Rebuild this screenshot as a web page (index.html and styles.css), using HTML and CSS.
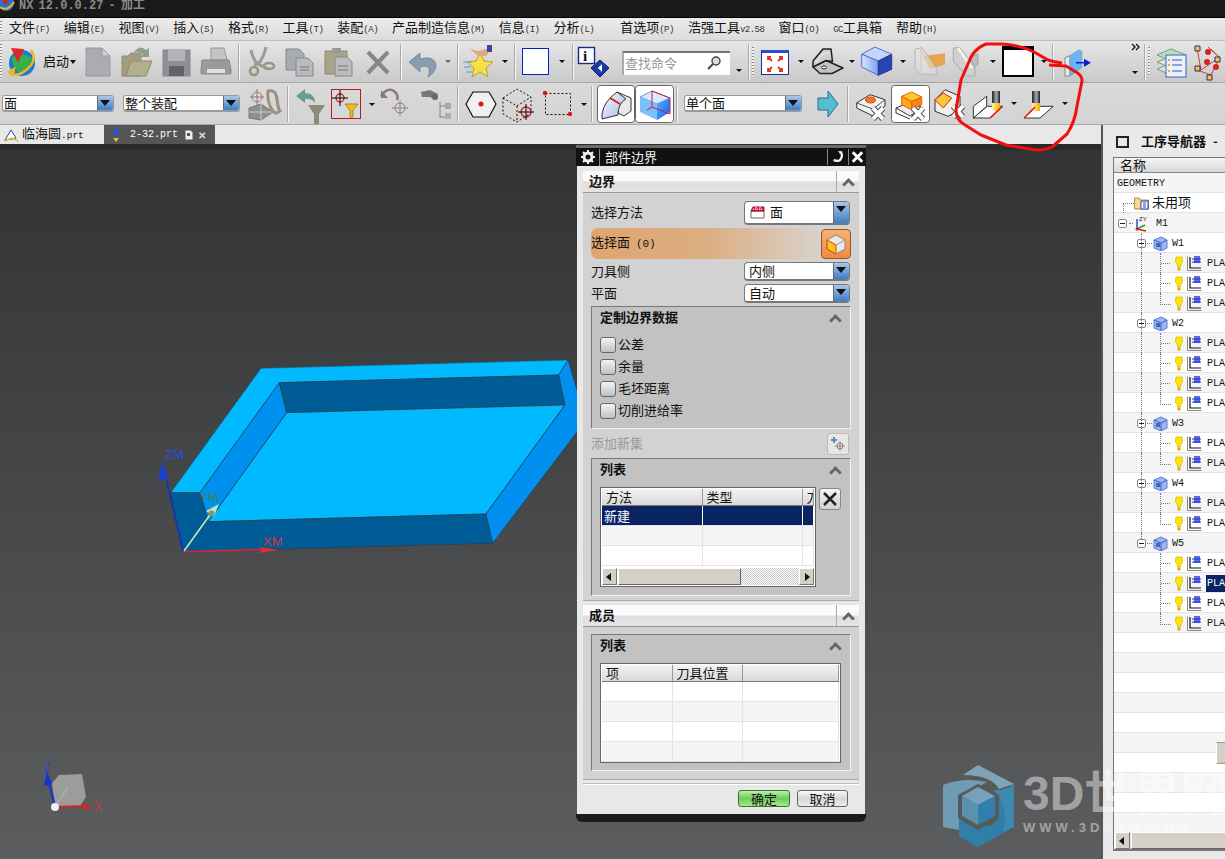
FILE: index.html
```html
<!DOCTYPE html>
<html lang="zh-CN">
<head>
	<meta charset="UTF-8">
	<title>NX 12.0.0.27 - 加工</title>
	<link rel="stylesheet" href="styles.css">
</head>
<body>
<svg class="defs" width="0" height="0">
	<defs>
		<linearGradient id="gTool" x1="0" y1="0" x2="1" y2="0"><stop offset="0" stop-color="#222"/><stop offset=".55" stop-color="#a4aab8"/><stop offset="1" stop-color="#1a1a2a"/></linearGradient>
		<linearGradient id="gTip" x1="0" y1="0" x2="1" y2="0"><stop offset="0" stop-color="#fff0a0"/><stop offset="1" stop-color="#f0b010"/></linearGradient>
		<linearGradient id="gCubeL" x1="0" y1="0" x2="1" y2="0"><stop offset="0" stop-color="#d8e4ff"/><stop offset="1" stop-color="#7fa0f0"/></linearGradient>
		<linearGradient id="gBlueR" x1="0" y1="0" x2="1" y2="1"><stop offset="0" stop-color="#58b0ff"/><stop offset="1" stop-color="#0a60e8"/></linearGradient>
		<linearGradient id="gSheet" x1="0" y1="0" x2="1" y2="1"><stop offset="0" stop-color="#f4f6ff"/><stop offset="1" stop-color="#a8bce4"/></linearGradient>
		<symbol id="minus" viewBox="0 0 9 9"><rect x=".5" y=".5" width="8" height="8" rx="1.5" fill="#fff" stroke="#888"/><path d="M2 4.500h5" stroke="#222"/></symbol>
		<symbol id="part" viewBox="0 0 15 15"><path d="M1 4l7-3 6 3v8l-6 3-7-3z" fill="#9db4f2" stroke="#5f7fd8"/><path d="M1 4l7 3 6-3M8 7v8" fill="none" stroke="#3f5fc0"/><rect x="3" y="7" width="4" height="4" fill="#4a64b8"/></symbol>
		<symbol id="bulb" viewBox="0 0 8 15"><path d="M1 1h6l.6 5-2 3v2H2.500V9L.4 6z" fill="#ffe600" stroke="#c8a800" stroke-width=".6"/><circle cx="4" cy="13" r="1.800" fill="#e2b400"/></symbol>
		<symbol id="oper" viewBox="0 0 15 15"><path d="M.5.500v14h14" fill="none" stroke="#888"/><path d="M3 1v11h11" fill="none" stroke="#111" stroke-width="1.200"/><rect x="7" y="0" width="6" height="7" fill="#5a6ee0"/><path d="M5 3h9M5 6h9" stroke="#1a2fd0"/></symbol>
	</defs>
</svg>

<div class="page">
	<div class="titlebar">
		<svg class="title-logo" width="15" height="12" viewBox="0 0 15 12"><circle cx="6" cy="3" r="8" fill="#2a6fd0"/><path d="M0 7q8 5 14-5" fill="none" stroke="#e8b820" stroke-width="2"/><path d="M2 0h7L5 5z" fill="#d82020"/></svg>
		<span class="title-text">NX 12.0.0.27 - 加工</span>
	</div>

	<div class="menubar">
		<span class="grip"></span>
		<span class="menu-item m1">文件<i>(F)</i></span>
		<span class="menu-item">编辑<i>(E)</i></span>
		<span class="menu-item">视图<i>(V)</i></span>
		<span class="menu-item">插入<i>(S)</i></span>
		<span class="menu-item">格式<i>(R)</i></span>
		<span class="menu-item">工具<i>(T)</i></span>
		<span class="menu-item">装配<i>(A)</i></span>
		<span class="menu-item">产品制造信息<i>(M)</i></span>
		<span class="menu-item">信息<i>(I)</i></span>
		<span class="menu-item">分析<i>(L)</i></span>
		<span class="menu-item m2">首选项<i>(P)</i></span>
		<span class="menu-item">浩强工具<i>v2.58</i></span>
		<span class="menu-item">窗口<i>(O)</i></span>
		<span class="menu-item"><i>GC</i>工具箱</span>
		<span class="menu-item">帮助<i>(H)</i></span>
	</div>

	<div class="toolbar tb1">
		<span class="grip"></span>
		<svg width="37" height="42" viewBox="4 41 37 42"><circle cx="22" cy="63" r="13" fill="#1f78d8"/><path d="M12 58q8-8 20 0-3 12-12 15-8-6-8-15z" fill="#35b04a"/><path d="M31 50q8 12-9 23-9 4-13-1l5-3-1 7" fill="none" stroke="#e8b820" stroke-width="2.500"/><path d="M11 48l13 1-6 14z" fill="#e02828"/></svg>
		<span class="start-label">启动</span>
		<svg width="11" height="42" viewBox="69 41 11 42"><path class="caret" d="M70 60h6l-3 4z"/></svg>
		<svg width="36" height="42" viewBox="80 41 36 42"><path d="M86 48h16l8 8v20H86z" fill="#aaacb2" stroke="#9a9a9a"/><path d="M102 48v8h8z" fill="#d0d0d0" stroke="#9a9a9a"/></svg>
		<svg width="41" height="42" viewBox="116 41 41 42"><path d="M122 76V56h6l3-3h10v23z" fill="#a29d7c" stroke="#8e8a70"/><path d="M126 76l5-15h21l-6 15z" fill="#b3ae8c" stroke="#8e8a70"/><path d="M134 52q6-8 12-2l3-2v9h-9l3-3q-4-3-9-2z" fill="#8aa08a"/></svg>
		<svg width="38" height="42" viewBox="157 41 38 42"><rect x="163" y="50" width="27" height="26" fill="#8c8e98" stroke="#888"/><rect x="168" y="50" width="17" height="11" fill="#b4b4b4"/><rect x="169" y="66" width="15" height="10" fill="#62636a"/></svg>
		<svg width="43" height="42" viewBox="195 41 43 42"><path d="M211 48h13l3 12h-16z" fill="#c4c4c4" stroke="#999"/><path d="M202 60h27l2 10v4h-30v-4z" fill="#9a9a9a" stroke="#888"/><rect x="207" y="69" width="18" height="4" fill="#e0e0e0"/></svg>
		<span class="sep"></span>
		<svg width="40" height="42" viewBox="240 41 40 42"><path d="M266 47q-2 10-8 17l-4 1M251 50q2 10 7 14l10 5" fill="none" stroke="#9a9a9a" stroke-width="3"/><circle cx="254" cy="71" r="4" fill="none" stroke="#98967a" stroke-width="2.500"/><ellipse cx="269" cy="66" rx="5" ry="3" fill="none" stroke="#98967a" stroke-width="2.500"/></svg>
		<svg width="39" height="42" viewBox="280 41 39 42"><path d="M286 49h13l5 5v16h-18z" fill="#a9abb2" stroke="#888"/><path d="M296 58h12l5 5v13h-17z" fill="#b9bac0" stroke="#888"/><path d="M300 67h9M300 70h9" stroke="#777"/></svg>
		<svg width="40" height="42" viewBox="319 41 40 42"><path d="M325 51h22v23h-22z" fill="#a8a586" stroke="#8a886e"/><rect x="332" y="48" width="9" height="5" fill="#999"/><path d="M335 57h12l5 5v14h-17z" fill="#bcbcc0" stroke="#888"/><path d="M338 66h10M338 70h10" stroke="#777"/></svg>
		<svg width="41" height="42" viewBox="359 41 41 42"><path d="M368 52l20 21M388 52l-20 21" stroke="#868686" stroke-width="4"/></svg>
		<span class="sep"></span>
		<svg width="55" height="42" viewBox="402 41 55 42"><path d="M409 62l11-9v6q14-4 16 6 0 7-8 12 4-10-3-11l-5 1v5z" fill="#8a9db0" stroke="#7a8ea0"/><path class="caret-gray" d="M445 60h6l-3 3z"/></svg>
		<span class="sep"></span>
		<svg width="55" height="42" viewBox="459 41 55 42"><path d="M480 53l4 8 9 1-7 6 2 9-8-5-8 5 2-9-7-6 9-1z" fill="#f6e04a" stroke="#b8a030"/><path d="M470 49l8 2 8-2 4-4 2 3-6 8h-8z" fill="#e0a880"/><rect x="487" y="45" width="5" height="7" fill="#3a48a0"/><path d="M463 62h9M464 67h7M466 72h6" stroke="#4fa0e0"/><path class="caret" d="M502 60h6l-3 3z"/></svg>
		<span class="sep"></span>
		<svg width="56" height="42" viewBox="516 41 56 42"><rect x="522.500" y="48.500" width="26" height="26" fill="#fff" stroke="#0a1ec8"/><path class="caret" d="M559 60h6l-3 3z"/></svg>
		<span class="sep"></span>
		<svg width="40" height="42" viewBox="574 41 40 42"><rect x="578.500" y="47.500" width="16" height="16" fill="#fff" stroke="#1a2a8a" stroke-width="1.400"/><text class="info-i" x="583" y="61">i</text><path d="M600 60l9 8-9 9-9-9z" fill="#1a3aa8" stroke="#0a1a60"/><path d="M598 68l4-4v8z" fill="#fff"/></svg>
		<div class="search">
			<span class="search-box">查找命令<svg width="16" height="16" viewBox="0 0 16 16"><circle cx="10" cy="6" r="4" fill="#ddd" stroke="#444" stroke-width="1.400"/><path d="M7 9l-5 5" stroke="#444" stroke-width="2"/></svg></span>
			<svg class="search-caret" width="10" height="8" viewBox="0 0 10 8"><path class="caret" d="M2 2h6l-3 3z"/></svg>
		</div>
		<span class="sep"></span>
		<span class="grip grip2"></span>
		<svg width="49" height="42" viewBox="757 41 49 42"><rect x="761.500" y="50.500" width="27" height="24" fill="#fff" stroke="#1a2a9a"/><rect x="762" y="50" width="27" height="3" fill="#2a50d0"/><path d="M768 57l4 4m-4-1v-3h3M782 57l-4 4m4-1v-3h-3M768 71l4-4m-4 1v3h3M782 71l-4-4m4 1v3h-3" fill="none" stroke="#e83018" stroke-width="1.800"/><path class="caret" d="M798 60h6l-3 3z"/></svg>
		<svg width="51" height="42" viewBox="806 41 51 42"><path d="M813 67l13-6.500L843 68l-11 5.500H820z" fill="#c4c4c4" stroke="#222" stroke-width="1.500" stroke-linejoin="round"/><path d="M813 67v-6l10-12h8l1.500 12.500-6.500-1z" fill="#cfcfcf" stroke="#222" stroke-width="1.500" stroke-linejoin="round"/><path d="M816 62l8-9 5 0" fill="none" stroke="#f4f4f4"/><ellipse cx="824" cy="67.500" rx="2.500" ry="1.500" fill="#fff" stroke="#222"/><path class="caret" d="M849 60h6l-3 3z"/></svg>
		<svg width="51" height="42" viewBox="857 41 51 42"><path d="M861.700 54.300L875 47l16.700 7.300L878.300 61z" fill="#c4d6fc" stroke="#5070d0"/><path d="M861.700 54.300L878.300 61v14.300L861.700 67z" fill="url(#gCubeL)" stroke="#5070d0"/><path d="M891.700 54.300v15l-13.400 6V61z" fill="#2a44b0" stroke="#20389a"/><path class="caret" d="M900 60h6l-3 3z"/></svg>
		<svg width="37" height="42" viewBox="908 41 37 42"><path d="M923 56l25-3v11l-18 5z" fill="#e8a450"/><path d="M915 49l7-1.300 15 21.600v5H921l-6-6z" fill="#e4e4e4" fill-opacity=".55" stroke="#b4b4b4"/><path d="M921 48v26M919 48l18 26" stroke="#c8c8c8" fill="none"/></svg>
		<svg width="55" height="42" viewBox="945 41 55 42"><path d="M970 58l8-4v10l-3 3z" fill="#bdbdbd" stroke="#a4a4a4"/><path d="M953.300 48l6.700-.300 15 20v8.300h-8.300l-13.400-15z" fill="#d0d0d0" stroke="#a8a8a8"/><path d="M958 48l14 20" stroke="#f0f0f0" stroke-width="3"/><path class="caret" d="M990 60h6l-3 3z"/></svg>
		<svg width="52" height="42" viewBox="1000 41 52 42"><rect x="1002" y="46" width="32" height="31" fill="#000"/><rect x="1004" y="50" width="28" height="25" fill="#fff"/><path class="caret" d="M1041 60h6l-3 3z"/></svg>
		<span class="sep"></span>
		<svg width="74" height="42" viewBox="1054 41 74 42"><path d="M1065 57.700l5-2V76h-5z" fill="#e8e8e8" stroke="#888"/><path d="M1070 55.700l8.300-5.400 3.400.7v16.700l-11.700 8.300z" fill="#68b4f4" stroke="#80a0c8"/><path d="M1076 62.700h9" stroke="#0a1ec8" stroke-width="1.500"/><path d="M1091 62.700l-7-4v8z" fill="#0a1ec8"/></svg>
		<svg width="16" height="42" viewBox="1128 41 16 42"><path d="M1132 44l3 3-3 3M1136 44l3 3-3 3" fill="none" stroke="#111" stroke-width="1.300"/><path class="caret" d="M1132 71h6l-3 3z"/></svg>
		<span class="sep"></span>
		<span class="grip grip2"></span>
		<svg width="39" height="42" viewBox="1153 41 39 42"><path d="M1157 55l14-6 15 6-15 6z" fill="#b8e0c0" stroke="#7a9a80"/><path d="M1157 62l14-6 15 6-15 6zM1157 69l14-6 15 6-15 6z" fill="#d8e8d8" stroke="#7a9a80"/><rect x="1166" y="55" width="20" height="22" fill="#eaf0ff" stroke="#4060b8"/><path d="M1172 60h10M1172 65h10M1172 71h10" stroke="#3050c0"/><path d="M1168 59h2v2h-2zM1168 64h2v2h-2zM1168 70h2v2h-2z" fill="#d8b820"/></svg>
		<svg width="33" height="42" viewBox="1192 41 33 42"><path d="M1197 48l4 22 19-13-9 18-14-5M1208 47l12 11-9-9" fill="none" stroke="#c04040"/><circle cx="1208" cy="52" r="3" fill="#d82020"/><circle cx="1207" cy="62" r="3" fill="#d82020"/><circle cx="1216" cy="67" r="3" fill="#d82020"/><path d="M1195 46h5v5h-5zM1215 57h5v5h-5zM1195 66h5v5h-5zM1207 75h5v5h-5z" fill="#e8d030" stroke="#3a1a80"/></svg>
	</div>

	<div class="toolbar tb2">
		<span class="combo c1"><span>面</span><b></b></span>
		<span class="combo c2"><span>整个装配</span><b></b></span>
		<svg width="47" height="42" viewBox="240 83 47 42"><path d="M249 108l12-4 12 8-12 8-12-2z" fill="#8f8f8f" stroke="#777"/><path d="M261 104v16M249 112l24 0" stroke="#ccc"/><circle cx="257" cy="97" r="5" fill="none" stroke="#a07070"/><path d="M257 89v16M250 97h14" stroke="#a07070"/><path d="M268 91q8-2 9 8t3 12q-5 5-9-3t-3-17z" fill="none" stroke="#9c9078" stroke-width="3"/></svg>
		<span class="sep"></span>
		<svg width="39" height="42" viewBox="289 83 39 42"><path d="M296 96l9-7v4q10 0 10 10-4-5-10-4v4z" fill="#6a9a9a"/><path d="M308 105h17l-6 9v10h-5v-10z" fill="#8c8c78"/></svg>
		<svg width="48" height="42" viewBox="328 83 48 42"><rect x="331.500" y="89.500" width="29" height="29" fill="#d8d8d8" stroke="#c01818"/><circle cx="340" cy="98" r="4" fill="none" stroke="#d81818" stroke-width="1.300"/><path d="M340 90v16M332 98h16" stroke="#000"/><path d="M345 104h13l-5 6v7h-3v-7z" fill="#f0c020" stroke="#a88410"/><path class="caret" d="M369 103h6l-3 3z"/></svg>
		<svg width="39" height="42" viewBox="376 83 39 42"><path d="M381 96q6-9 13-5 5 4 3 9" fill="none" stroke="#8a7a7a" stroke-width="2.500"/><path d="M381 90v8h7z" fill="#8a7a7a"/><circle cx="400" cy="108" r="5" fill="none" stroke="#b07070"/><path d="M400 100v16M392 108h16" stroke="#888"/></svg>
		<svg width="42" height="42" viewBox="415 83 42 42"><path d="M421 92l9-2 8 4-3 6-5-3-8 0z" fill="#777"/><circle cx="435" cy="97" r="3" fill="#666"/><path d="M440 102v16M440 106h5M440 117h5" stroke="#888"/><rect x="445" y="103" width="6" height="6" fill="#a8a8a8"/><rect x="445" y="113" width="6" height="6" fill="#c0a8a0"/></svg>
		<span class="sep"></span>
		<svg width="40" height="42" viewBox="459 83 40 42"><path d="M473 92h16l7 12-7 13h-16l-7-13z" fill="#f0f0f0" stroke="#111" stroke-width="1.200"/><circle cx="481" cy="104" r="2.500" fill="#d81818"/></svg>
		<svg width="39" height="42" viewBox="499 83 39 42"><path d="M503 98l14-9 14 8v16l-14 9-14-8zM503 98l14 8 14-9M517 106v16" fill="none" stroke="#111" stroke-dasharray="2 2"/><circle cx="526" cy="112" r="5" fill="none" stroke="#d81818" stroke-width="1.300"/><path d="M526 104v16M518 112h16" stroke="#000"/></svg>
		<svg width="53" height="42" viewBox="538 83 53 42"><rect x="545.500" y="93.500" width="25" height="21" fill="none" stroke="#111" stroke-dasharray="2 2"/><circle cx="545" cy="93" r="2.200" fill="#d81818"/><circle cx="570" cy="114" r="2.200" fill="#d81818"/><path class="caret" d="M581 103h6l-3 3z"/></svg>
		<span class="sep"></span>
		<svg width="42" height="42" viewBox="593 83 42 42"><rect x="597.500" y="85.500" width="37" height="37" rx="3" fill="#fff" stroke="#666"/><path d="M617 92l14 6v13l-7 5-6-3z" fill="#e8e8e8" stroke="#333"/><path d="M602 119q-1-12 9-22l6-5 9 7q-8 4-8 16z" fill="url(#gSheet)" stroke="#333"/><path d="M610 98l10 6" stroke="#e81818" stroke-width="2"/></svg>
		<svg width="41" height="42" viewBox="635 83 41 42"><rect x="635.500" y="85.500" width="38" height="37" rx="3" fill="#fff" stroke="#666"/><path d="M640 97l12-6 18 7-13 6z" fill="#d8ecff" stroke="#7090d0"/><path d="M640 97v15l17 8v-16z" fill="#7cc0f8"/><path d="M670 98v14l-13 8v-16z" fill="url(#gBlueR)"/><path d="M652 91l18 7v16l-18-7zM652 107l-5 3" fill="none" stroke="#c02050"/></svg>
		<span class="sep"></span>
		<span class="combo c3"><span>单个面</span><b></b></span>
		<svg width="45" height="42" viewBox="802 83 45 42"><path d="M818 98h10v-7l10 13-10 13v-7h-10z" fill="#58bcd0" stroke="#2a6a90"/></svg>
		<span class="sep"></span>
		<svg width="40" height="42" viewBox="849 83 40 42"><path d="M856.700 103L870 94.700l15 5v6.300L873 116l-16.300-8z" fill="#f2f2f2" stroke="#333"/><path d="M856.700 103l16.300 6 12-9.300" fill="none" stroke="#555"/><ellipse cx="870.500" cy="100" rx="5" ry="3" fill="#f07818" stroke="#e04010"/><path class="x-under" d="M873 108l10 11M883 108l-10 11"/><path class="x-over" d="M873 108l10 11M883 108l-10 11"/></svg>
		<svg width="43" height="42" viewBox="889 83 43 42"><rect x="891.500" y="85.500" width="38" height="37" rx="3" fill="#fff" stroke="#666"/><path d="M896 108l14-6 13 6-13 8z" fill="#eee" stroke="#333"/><path d="M896 108v5l14 6" fill="none" stroke="#333"/><path d="M901.700 96.300l10 5v8.400l-10-5z" fill="#ffa818" stroke="#e06010"/><path d="M911.700 101.300l10-4.300v7.700l-10 5z" fill="#f08810" stroke="#e06010"/><path d="M901.700 96.300l10-4.300 10 5-10 4.300z" fill="#ffc828" stroke="#e06010"/><path class="x-under" d="M913 108l10 11M923 108l-10 11"/><path class="x-over" d="M913 108l10 11M923 108l-10 11"/></svg>
		<svg width="37" height="42" viewBox="932 83 37 42"><path d="M935 99.700L945 89.700l15 6.600v14l-12 6-13-5z" fill="#efefef" stroke="#333"/><path d="M935 99.700L943.300 93l8.400 5-8.400 10z" fill="#f6c830" stroke="#e02818"/><path class="x-under" d="M953 106l10 11M963 106l-10 11"/><path class="x-over" d="M953 106l10 11M963 106l-10 11"/></svg>
		<svg width="51" height="42" viewBox="969 83 51 42"><path d="M973.300 118l14-11.700H1003L990 118z" fill="#fff" stroke="#333"/><path d="M973.300 118v-11.700l13.400-10v10z" fill="#fff" stroke="#333"/><rect x="992" y="91" width="8" height="12" fill="url(#gTool)"/><rect x="992" y="103" width="8" height="8" fill="url(#gTip)"/><path d="M990 118l11.700-11" stroke="#e01818" stroke-width="1.500"/><path class="caret" d="M1011 102h6l-3 3z"/></svg>
		<svg width="50" height="42" viewBox="1020 83 50 42"><path d="M1024 118l12.700-11.700h16.600L1040 118z" fill="#fff" stroke="#333"/><rect x="1032" y="91" width="8" height="12" fill="url(#gTool)"/><rect x="1032" y="103" width="8" height="8" fill="url(#gTip)"/><path d="M1024 118l11-11" stroke="#e01818" stroke-width="1.500"/><path class="caret" d="M1062 102h6l-3 3z"/></svg>
	</div>

	<div class="workspace">
		<div class="left">
			<div class="tabs">
				<span class="tab"><svg width="16" height="14" viewBox="0 0 16 14"><path d="M2 12L8 2l5 8-4 1z" fill="#fff" stroke="#2040b0"/><path d="M1 13l8-3 6 3" fill="none" stroke="#e8c020" stroke-width="1.500"/></svg><span class="tab-name">临海圆<em>.prt</em></span></span>
				<span class="tab active"><svg width="8" height="15" viewBox="0 0 8 15"><rect x="2" y="0" width="4" height="10" fill="#3050d0"/><path d="M1 11h6l-3 4z" fill="#e8c020"/></svg><em>2-32.prt</em><svg class="tab-save" width="8" height="10" viewBox="0 0 8 10"><path d="M.5.500h5l2 2v7h-7z" fill="#eee"/><rect x="2" y="3" width="3" height="3" fill="#555"/></svg><span class="tab-x">✕</span></span>
			</div>
			<div class="viewport">
				<svg class="model" width="1101" height="715" viewBox="0 144 1101 715">
					<path d="M170.700 492.700L261 368.300 568 360 558.700 375 279.300 382.700 200 492.700z" fill="#00b9ff" stroke="#1b4c6c" stroke-width=".5"/>
					<path d="M279.300 382.700L286.700 412.700 208.300 521.700 200 492.700z" fill="#0090f0" stroke="#2b3c4c" stroke-width=".7"/>
					<path d="M279.300 382.700L558.700 375 565 405 286.700 412.700z" fill="#005c96" stroke="#2b3c4c" stroke-width=".7"/>
					<path d="M286.700 412.700L565 405 486 514 208.300 521.700z" fill="#00b9ff" stroke="#2b3c4c" stroke-width=".7"/>
					<path d="M170.700 492.700L183.300 551.700 492.700 543.300 486 514 208.300 521.700 200 492.700z" fill="#005c96" stroke="#2b3c4c" stroke-width=".7"/>
					<path d="M486 514L492.700 543.300 580 428 580 400 568 360 558.700 375 565 405z" fill="#0090f0" stroke="#2b3c4c" stroke-width=".7"/>
					<path d="M183.300 551.700L164 470" stroke="#1230c8" stroke-width="1.600"/>
					<path d="M162.500 461L169 480 165 478 158 481z" fill="#1a3ed0"/>
					<path d="M183.300 551.700L262 549.500" stroke="#e02030" stroke-width="1.600"/>
					<path d="M279 550L259 547 262 549.500 259 553z" fill="#e03030"/>
					<path d="M184 551L212 512" stroke="#cfe8c0" stroke-width="1.500"/>
					<path d="M219 504L206 511 214 516z" fill="#c4e4b4"/>
					<circle cx="211.500" cy="513.500" r="3" fill="#7f9a70"/>
					<text class="axis za" x="165" y="459">ZM</text>
					<text class="axis ya" x="199" y="502">YM</text>
					<text class="axis xa" x="263" y="546">XM</text>
					<path d="M52 783L59 775 82 774 86 797 80 806 55 806z" fill="#a8a8a8" fill-opacity=".85"/>
					<path d="M55 807L68 787" stroke="#a8c8a0" stroke-opacity=".6" stroke-width="1.500"/>
					<path d="M55 806L47.500 778" stroke="#1236d0" stroke-width="2"/>
					<path d="M47 771L52 784 44 786z" fill="#1236d0"/>
					<path d="M55 807L86 806" stroke="#d02828" stroke-width="2"/>
					<path d="M93 806.500L83 803v7z" fill="#d02828"/>
					<circle cx="55" cy="807" r="4" fill="#f0f0f0"/>
					<text class="axis zb" x="43" y="772">Z</text>
					<text class="axis xb" x="94" y="811">X</text>
				</svg>
			</div>
		</div>

		<div class="nav">
			<div class="nav-head">
				<span class="nav-box"></span>
				<span class="nav-title">工序导航器</span>
				<span class="nav-dash">-</span>
			</div>
			<div class="nav-table">
				<div class="nav-col">名称</div>
				<div class="row"><span class="geo">GEOMETRY</span></div>
				<div class="row unused"><svg width="15" height="13" viewBox="0 0 15 13"><path d="M.5 12V1h5l1 2h8v9z" fill="#f4d890" stroke="#b09040"/><rect x="7" y="4" width="7" height="8" fill="#fff" stroke="#2040c0"/><path d="M9 6h3M9 8h3M9 10h3" stroke="#2040c0"/></svg><span class="cjk">未用项</span></div>
				<div class="row root"><svg class="tog" width="9" height="9"><use href="#minus"/></svg><svg class="mcs" width="16" height="16" viewBox="0 0 16 16"><path d="M4 13V3" stroke="#1a2ad0" stroke-width="1.300"/><path d="M4 13l8-4" stroke="#28a028" stroke-width="1.500"/><path d="M4 13l9 2" stroke="#d82020" stroke-width="1.500"/><circle cx="4" cy="13" r="1.500" fill="#d82020"/><text class="mcs-t" x="6" y="5">ZY</text></svg><span class="lbl">M1</span></div>
				<div class="row wk trunk"><svg class="tog" width="9" height="9"><use href="#minus"/></svg><svg width="15" height="15"><use href="#part"/></svg><span class="lbl">W1</span></div>
				<div class="row leaf trunk branch"><svg width="8" height="15"><use href="#bulb"/></svg><svg width="15" height="15"><use href="#oper"/></svg><span class="op">PLANAR_MILL</span></div>
				<div class="row leaf trunk branch"><svg width="8" height="15"><use href="#bulb"/></svg><svg width="15" height="15"><use href="#oper"/></svg><span class="op">PLANAR_MILL_1</span></div>
				<div class="row leaf trunk end"><svg width="8" height="15"><use href="#bulb"/></svg><svg width="15" height="15"><use href="#oper"/></svg><span class="op">PLANAR_MILL_2</span></div>
				<div class="row wk trunk"><svg class="tog" width="9" height="9"><use href="#minus"/></svg><svg width="15" height="15"><use href="#part"/></svg><span class="lbl">W2</span></div>
				<div class="row leaf trunk branch"><svg width="8" height="15"><use href="#bulb"/></svg><svg width="15" height="15"><use href="#oper"/></svg><span class="op">PLANAR_MILL</span></div>
				<div class="row leaf trunk branch"><svg width="8" height="15"><use href="#bulb"/></svg><svg width="15" height="15"><use href="#oper"/></svg><span class="op">PLANAR_MILL_1</span></div>
				<div class="row leaf trunk branch"><svg width="8" height="15"><use href="#bulb"/></svg><svg width="15" height="15"><use href="#oper"/></svg><span class="op">PLANAR_MILL_2</span></div>
				<div class="row leaf trunk end"><svg width="8" height="15"><use href="#bulb"/></svg><svg width="15" height="15"><use href="#oper"/></svg><span class="op">PLANAR_MILL_3</span></div>
				<div class="row wk trunk"><svg class="tog" width="9" height="9"><use href="#minus"/></svg><svg width="15" height="15"><use href="#part"/></svg><span class="lbl">W3</span></div>
				<div class="row leaf trunk branch"><svg width="8" height="15"><use href="#bulb"/></svg><svg width="15" height="15"><use href="#oper"/></svg><span class="op">PLANAR_MILL</span></div>
				<div class="row leaf trunk end"><svg width="8" height="15"><use href="#bulb"/></svg><svg width="15" height="15"><use href="#oper"/></svg><span class="op">PLANAR_MILL_1</span></div>
				<div class="row wk trunk"><svg class="tog" width="9" height="9"><use href="#minus"/></svg><svg width="15" height="15"><use href="#part"/></svg><span class="lbl">W4</span></div>
				<div class="row leaf trunk branch"><svg width="8" height="15"><use href="#bulb"/></svg><svg width="15" height="15"><use href="#oper"/></svg><span class="op">PLANAR_MILL</span></div>
				<div class="row leaf trunk end"><svg width="8" height="15"><use href="#bulb"/></svg><svg width="15" height="15"><use href="#oper"/></svg><span class="op">PLANAR_MILL_1</span></div>
				<div class="row wk trunk-end"><svg class="tog" width="9" height="9"><use href="#minus"/></svg><svg width="15" height="15"><use href="#part"/></svg><span class="lbl">W5</span></div>
				<div class="row leaf branch"><svg width="8" height="15"><use href="#bulb"/></svg><svg width="15" height="15"><use href="#oper"/></svg><span class="op">PLANAR_MILL</span></div>
				<div class="row leaf branch"><svg width="8" height="15"><use href="#bulb"/></svg><svg width="15" height="15"><use href="#oper"/></svg><span class="op selected">PLANAR_MILL_1</span></div>
				<div class="row leaf branch"><svg width="8" height="15"><use href="#bulb"/></svg><svg width="15" height="15"><use href="#oper"/></svg><span class="op">PLANAR_MILL_2</span></div>
				<div class="row leaf end"><svg width="8" height="15"><use href="#bulb"/></svg><svg width="15" height="15"><use href="#oper"/></svg><span class="op">PLANAR_MILL_3</span></div>
				<div class="row"></div><div class="row"></div><div class="row"></div><div class="row"></div><div class="row"></div>
				<div class="row"></div><div class="row"></div><div class="row"></div><div class="row"></div><div class="row"></div>
				<div class="nav-scroll"><span class="sb-btn left-arrow"></span><span class="sb-thumb wide"></span></div>
				<span class="vthumb"></span>
			</div>
		</div>
	</div>

	<!-- dialog floats over the graphics window -->
	<div class="dialog">
		<div class="dlg-title">
			<svg class="gear" width="14" height="14" viewBox="0 0 14 14"><circle cx="7" cy="7" r="4" fill="none" stroke="#eee" stroke-width="3"/><path d="M7 0v3M7 11v3M0 7h3M11 7h3M2 2l2 2M10 10l2 2M12 2l-2 2M4 10l-2 2" stroke="#eee" stroke-width="2"/></svg>
			<span class="dlg-name">部件边界</span>
			<svg class="dlg-btn" width="21" height="16" viewBox="0 0 21 16"><path d="M6 11q6 3 8-2t-2-6" fill="none" stroke="#eee" stroke-width="2.400"/><path d="M10 2h5v3z" fill="#eee"/></svg>
			<svg class="dlg-btn" width="18" height="16" viewBox="0 0 18 16"><path d="M4 3l10 10M14 3L4 13" stroke="#fff" stroke-width="3"/></svg>
		</div>
		<div class="dlg-body">
			<div class="sec-head"><span>边界</span><b class="chev-box"><i class="chev"></i></b></div>
			<div class="sec-body sb1">
				<div class="form-row r24"><span>选择方法</span><span class="combo dlg-combo tall"><svg width="15" height="13" viewBox="0 0 15 13"><path d="M1 5h13v7H1z" fill="#fff" stroke="#666"/><path d="M1 5l2-4h11v4z" fill="#e02040" stroke="#a01030"/><path d="M3 3h9M6 1v4M10 1v4" stroke="#fff" stroke-dasharray="1 1"/></svg><span>面</span><b></b></span></div>
				<div class="pick"><span class="pick-label">选择面 <em>(0)</em></span><span class="pick-btn"><svg width="22" height="22" viewBox="0 0 22 22"><path d="M2 7l9-5 9 5v9l-9 5-9-5z" fill="#e8e8e8" stroke="#888"/><path d="M2 7l9 5v9l-9-5z" fill="#f8c818" stroke="#e83818"/><path d="M11 12l9-5" stroke="#999" fill="none"/></svg></span></div>
				<div class="form-row r19"><span>刀具侧</span><span class="combo dlg-combo"><span>内侧</span><b></b></span></div>
				<div class="form-row r19"><span>平面</span><span class="combo dlg-combo"><span>自动</span><b></b></span></div>
				<div class="group g1">
					<div class="grp-head"><span>定制边界数据</span><i class="chev"></i></div>
					<div class="checks">
						<label class="check"><i></i>公差</label>
						<label class="check"><i></i>余量</label>
						<label class="check"><i></i>毛坯距离</label>
						<label class="check"><i></i>切削进给率</label>
					</div>
				</div>
				<div class="add-row"><span>添加新集</span><span class="add-btn"><svg width="18" height="18" viewBox="0 0 18 18"><path d="M2 5h6M5 2v6" stroke="#6a8ab0" stroke-width="2"/><circle cx="11" cy="11" r="3" fill="none" stroke="#b07070"/><path d="M11 6v10M6 11h10" stroke="#888"/></svg></span></div>
				<div class="group g2">
					<div class="grp-head"><span>列表</span><i class="chev"></i></div>
					<div class="list-row">
						<div class="grid-wrap gw1">
							<table class="grid">
								<colgroup><col class="w100"><col class="w100"><col></colgroup>
								<tr class="hd"><th>方法</th><th>类型</th><th>刀</th></tr>
								<tr class="sel"><td>新建</td><td></td><td></td></tr>
								<tr class="alt"><td></td><td></td><td></td></tr>
								<tr><td></td><td></td><td></td></tr>
							</table>
							<div class="hscroll"><span class="sb-btn left-arrow"></span><span class="sb-thumb"></span><span class="sb-track"></span><span class="sb-btn right-arrow"></span></div>
						</div>
						<span class="del-btn"><svg width="16" height="16" viewBox="0 0 16 16"><path d="M2 2l12 12M14 2L2 14" stroke="#222" stroke-width="2.500"/></svg></span>
					</div>
				</div>
			</div>
			<div class="sec-head mt4"><span>成员</span><b class="chev-box"><i class="chev"></i></b></div>
			<div class="sec-body sb2">
				<div class="group g3">
					<div class="grp-head"><span>列表</span><i class="chev"></i></div>
					<div class="grid-wrap gw2">
						<table class="grid">
							<colgroup><col class="w70"><col class="w70"><col></colgroup>
							<tr class="hd"><th>项</th><th>刀具位置</th><th></th></tr>
							<tr><td></td><td></td><td></td></tr>
							<tr class="alt"><td></td><td></td><td></td></tr>
							<tr><td></td><td></td><td></td></tr>
							<tr class="alt"><td></td><td></td><td></td></tr>
						</table>
					</div>
				</div>
			</div>
			<div class="dlg-foot">
				<span class="btn ok">确定</span>
				<span class="btn">取消</span>
			</div>
		</div>
		<div class="dlg-bottom"></div>
	</div>

	<!-- site watermark, white at partial opacity -->
	<div class="watermark">
		<svg width="72" height="82" viewBox="0 0 72 82"><path d="M0 20Q20 12 44 17L35 22 18 31 18 57 0 62z" fill="#6f9cb4"/><path d="M35 0L71 19 56 24Q48 10 20 10z" fill="#7fa4b8"/><path d="M0 62L0 20 18 31Q12 50 22 66z" fill="#6f9cb4"/><path d="M71 19V62L56 70Q68 42 50 25 62 26 71 19z" fill="#3d8ab0"/><path d="M71 62L35 82 14 70Q42 72 54 55L54 30Q66 46 60 66z" fill="#2f7fa8"/><path d="M35 82L16 71 16 50Q22 66 52 60 46 72 35 82z" fill="#2f7fa8"/><path d="M35 19L56 30V53L35 65 15 53V30z" fill="#58595b"/><path d="M35 22L52 31 35 40 19 31z" fill="#74a2bc"/><path d="M19 31L35 40V60L19 51z" fill="#5b90ae"/><path d="M52 31L35 40V60L52 51z" fill="#2f80ad"/></svg>
		<div class="wm-text">
			<div class="wm-big">3D世界网</div>
			<div class="wm-url">WWW.3DSJW.COM</div>
		</div>
	</div>

	<!-- hand drawn marking on the screenshot -->
	<svg class="scribble" width="1225" height="859" viewBox="0 0 1225 859"><path d="M1062 63q-8-1-14-3l-14-8q-14-7-32-8l-16 0q-10 4-15 13l-10 23-5 30q0 10 9 15l16 10 25 10 30 5q10 0 16-3l15-13q8-12 10-28l5-25q0-6-6-9l-10-6-17-1" fill="none" stroke="#f01010" stroke-width="3" stroke-linejoin="round"/></svg>
</div>
</body>
</html>
```

FILE: styles.css
```css
* { box-sizing: border-box; }

body {
	margin: 0;
	background: #000;
	overflow: hidden;
	font-family: "Noto Sans CJK SC", "Liberation Sans", sans-serif;
	font-size: 13px;
	color: #111;
}
svg { display: block; flex: none; }
.defs { position: absolute; }

.page {
	position: relative;
	width: 1225px;
	height: 859px;
	display: flex;
	flex-direction: column;
	overflow: hidden;
}

/* title + menu */
.titlebar {
	height: 18px;
	flex: none;
	display: flex;
	background: #1a1a1a;
	border-bottom: 1px solid #000;
}
.title-logo { margin-right: 4px; }
.title-text {
	font-family: "Liberation Mono", "Noto Sans CJK SC", monospace;
	font-size: 12px;
	line-height: 13px;
	font-weight: bold;
	color: #8a8a8a;
	word-spacing: -2px;
}
.menubar {
	height: 23px;
	flex: none;
	display: flex;
	align-items: center;
	gap: 14px;
	padding-bottom: 2px;
	background: linear-gradient(#ececec, #dcdcdc);
	border-bottom: 1px solid #bdbdbd;
	position: relative;
	white-space: nowrap;
}
.menu-item { line-height: 18px; }
.menu-item i {
	font-style: normal;
	font-family: "Liberation Mono", monospace;
	font-size: 9px;
	letter-spacing: -.5px;
	color: #333;
}
.m1 { margin-left: -9px; }
.m2 { margin-left: 12px; }

/* toolbars */
.grip {
	width: 4px;
	align-self: stretch;
	margin: 3px 0;
	flex: none;
	background: repeating-linear-gradient(#888 0 1px, #f4f4f4 1px 3px);
	background-size: 2px 100%;
	background-repeat: no-repeat;
}
.grip2 { width: 7px; background-position: 2px 0; margin: 6px 0; }
.toolbar {
	height: 42px;
	flex: none;
	display: flex;
	align-items: center;
	border-bottom: 1px solid #a8a8a8;
}
.tb1 { background: linear-gradient(#e6e6e6, #c9c9c9); }
.tb2 { background: linear-gradient(#dadada, #d3d3d3); }
.sep {
	width: 2px;
	height: 36px;
	flex: none;
	background: linear-gradient(90deg, #a9a9a9 50%, #f6f6f6 50%);
}
.start-label { width: 28px; padding: 0 0 2px 2px; line-height: 18px; }
.caret { fill: #111; }
.caret-gray { fill: #666; }
.x-under { stroke: #555; stroke-width: 6; fill: none; }
.x-over { stroke: #fff; stroke-width: 4; fill: none; }
.info-i {
	font-family: "Liberation Serif", serif;
	font-weight: bold;
	font-size: 15px;
	fill: #111;
}
.search {
	width: 134px;
	padding-left: 8px;
	display: flex;
	align-items: flex-end;
	align-self: stretch;
	padding-bottom: 7px;
}
.search-box {
	width: 108px;
	height: 24px;
	background: #fff;
	border-top: 2px solid #777;
	border-left: 2px solid #aaa;
	color: #999;
	display: flex;
	align-items: center;
	justify-content: space-between;
	padding: 0 8px 2px 1px;
	line-height: 16px;
}
.search-caret { margin-left: 4px; }

.combo {
	display: flex;
	height: 17px;
	flex: none;
	align-items: center;
	background: #fff;
	border: 1px solid #999;
	border-bottom-width: 2px;
	border-radius: 3px;
	font-size: 13px;
	line-height: 14px;
}
.combo > span { flex: 1; padding: 0 0 1px 1px; }
.combo b {
	width: 16px;
	align-self: stretch;
	flex: none;
	position: relative;
	background: linear-gradient(#a9c6e8, #3b7fc8);
	border-left: 1px solid #666;
	border-radius: 0 2px 2px 0;
}
.combo b::after {
	content: "";
	position: absolute;
	left: 2px;
	top: 4px;
	border: 5px solid transparent;
	border-top: 6px solid #111;
	border-bottom: 0;
}
.c1 { width: 112px; margin-left: 2px; }
.c2 { width: 117px; margin-left: 9px; }
.c3 { width: 118px; margin-left: 6px; }

/* work area */
.workspace { flex: 1; display: flex; min-height: 0; }
.left { width: 1101px; display: flex; flex-direction: column; flex: none; }
.tabs {
	height: 19px;
	flex: none;
	display: flex;
	background: #e8e8e8;
}
.tab {
	width: 104px;
	display: flex;
	align-items: center;
	gap: 3px;
	padding-left: 3px;
	line-height: 17px;
}
.tab-name { padding-bottom: 2px; white-space: nowrap; }
.tab em {
	font-style: normal;
	font-family: "Liberation Mono", monospace;
	font-size: 9.500px;
}
.tab.active {
	width: 111px;
	padding-left: 8px;
	gap: 0;
	background: #555;
	color: #fff;
}
.tab.active em { margin-left: 10px; font-size: 10px; padding-bottom: 1px; }
.tab-save { margin-left: 7px; }
.tab-x { margin-left: 5px; font-size: 10px; color: #ddd; font-weight: bold; }
.viewport {
	flex: 1;
	min-height: 0;
	overflow: hidden;
	border-top: 6px solid #2a2a2b;
	background: linear-gradient(#323335, #5c5d5f);
}
.model { margin-top: -6px; }
.axis { font-family: "Liberation Sans", sans-serif; font-size: 13px; }
.za { fill: #2a4ee0; }
.ya { fill: #3c8a48; }
.xa { fill: #d83040; }
.zb { fill: #2848e0; font-size: 12px; }
.xb { fill: #c83838; font-size: 12px; }
.mcs-t { font-size: 6px; font-family: "Liberation Sans", sans-serif; fill: #111; }

/* navigator */
.nav {
	width: 124px;
	flex: none;
	background: #e9e9e9;
	border-left: 2px solid #555;
	display: flex;
	flex-direction: column;
	overflow: hidden;
	padding-bottom: 8px;
}
.nav-head {
	height: 32px;
	flex: none;
	display: flex;
	align-items: center;
	padding-left: 13px;
	padding-top: 2px;
	font-weight: bold;
	white-space: nowrap;
}
.nav-box { width: 13px; height: 12px; border: 2px solid #222; margin-right: 12px; flex: none; }
.nav-title { padding-bottom: 3px; }
.nav-dash { margin-left: 7px; padding-bottom: 3px; }
.nav-table {
	position: relative;
	flex: 1;
	width: 140px;
	margin-left: 10px;
	background: #fff;
	border: 1px solid #777;
	border-bottom-width: 2px;
	overflow: hidden;
}
.nav-col {
	height: 15px;
	padding-left: 6px;
	line-height: 14px;
	background: linear-gradient(#f4f4f4, #d8d8d8);
	border-bottom: 1px solid #888;
}
.row {
	position: relative;
	height: 20px;
	display: flex;
	align-items: center;
	padding-top: 2px;
	border-bottom: 1px solid #e4e4e4;
	white-space: nowrap;
}
.row:nth-child(even) { background: #f5f5f5; }
.geo, .op, .lbl {
	font-family: "Liberation Mono", monospace;
	font-size: 10px;
}
.geo { padding-left: 3px; }
.unused { padding-left: 20px; gap: 3px; }
.cjk { line-height: 16px; padding-bottom: 3px; }
.root { padding-left: 4px; }
.root .mcs { margin: 0 3px 0 6px; }
.wk { padding-left: 23px; }
.wk .tog { margin-right: 7px; }
.lbl { margin-left: 4px; }
.leaf { padding-left: 61px; gap: 4px; }
.op { padding: 0 1px; line-height: 17px; }
.selected { background: #0a2463; color: #fff; }

/* tree connector lines */
.trunk::before, .trunk-end::before, .branch::after, .end::after, .unused::before, .root::before {
	content: "";
	position: absolute;
	border-left: 1px dotted #777;
}
.trunk::before { left: 27px; top: 0; bottom: -1px; }
.trunk-end::before { left: 27px; top: 0; height: 6px; }
.branch::after { left: 46px; top: 0; bottom: -1px; width: 10px; background: repeating-linear-gradient(90deg, #777 0 1px, transparent 1px 2px) 0 10px/10px 1px no-repeat; }
.end::after { left: 46px; top: 0; height: 11px; width: 10px; border-bottom: 1px dotted #777; }
.unused::before { left: 9px; top: 10px; bottom: -1px; width: 10px; border-top: 1px dotted #777; }
.root::before { left: 15px; top: 10px; width: 4px; border-left: 0; border-top: 1px dotted #777; }
.wk::after {
	content: "";
	position: absolute;
	left: 33px;
	top: 10px;
	width: 5px;
	border-top: 1px dotted #777;
}
.nav-scroll {
	position: absolute;
	left: 1px;
	right: 0;
	bottom: 0;
	height: 17px;
	display: flex;
	background: #e9e9e9;
}
.vthumb {
	position: absolute;
	left: 102px;
	top: 584px;
	width: 12px;
	height: 22px;
	background: #d4d0c8;
	border: 1px solid #999;
	border-left-color: #fff;
}

/* scrollbar parts */
.sb-btn {
	width: 15px;
	flex: none;
	position: relative;
	background: #d4d0c8;
	border: 1px solid;
	border-color: #fff #777 #777 #fff;
}
.sb-btn::after {
	content: "";
	position: absolute;
	top: 4px;
	border: 4px solid transparent;
}
.left-arrow::after { left: 0; border-right: 5px solid #111; border-left: 0; margin-left: 3px; }
.right-arrow::after { left: 0; border-left: 5px solid #111; border-right: 0; margin-left: 5px; }
.sb-thumb {
	flex: none;
	width: 123px;
	margin-left: 1px;
	background: #d4d0c8;
	border: 1px solid;
	border-color: #fff #666 #666 #fff;
}
.sb-thumb.wide { width: 120px; }
.sb-track {
	flex: 1;
	background: repeating-conic-gradient(#c8c8c8 0 25%, #fff 0 50%) 0 0 / 2px 2px;
}

/* dialog */
.dialog {
	position: absolute;
	left: 576px;
	top: 145px;
	width: 290px;
	height: 677px;
	display: flex;
	flex-direction: column;
}
.dlg-title {
	height: 21px;
	flex: none;
	display: flex;
	align-items: center;
	background: #111;
	border-top: 3px solid #6a6a6a;
	color: #f0f0f0;
	padding-left: 5px;
}
.gear { margin-right: 4px; }
.dlg-name {
	flex: 1;
	padding: 0 0 2px 5px;
	border-left: 1px solid #888;
	line-height: 15px;
}
.dlg-btn { border-left: 1px solid #888; }
.dlg-body {
	flex: 1;
	min-height: 0;
	background: #e8e8e8;
	margin: 0 1px;
	padding: 5px 6px 0;
	display: flex;
	flex-direction: column;
}
.dlg-bottom {
	height: 8px;
	flex: none;
	background: #1c1c1c;
	border-radius: 0 0 6px 6px;
}
.sec-head {
	height: 22px;
	flex: none;
	display: flex;
	justify-content: space-between;
	align-items: stretch;
	font-weight: bold;
	line-height: 20px;
	padding-left: 6px;
	background: linear-gradient(#fafafa 45%, #dedede 55%, #e4e4e4);
	border-bottom: 1px solid #999;
}
.mt4 { margin-top: 4px; }
.chev-box {
	width: 23px;
	display: flex;
	align-items: center;
	justify-content: center;
	border-left: 1px solid #aaa;
}
.chev {
	display: block;
	width: 9px;
	height: 9px;
	margin-top: 5px;
	border-top: 3px solid #666;
	border-left: 3px solid #666;
	transform: rotate(45deg);
}
.sec-body {
	background: #d2d2d2;
	padding: 0 8px;
	flex: none;
	border-bottom: 1px solid #aaa;
}
.sb1 { height: 408px; padding-top: 8px; }
.sb2 { height: 153px; padding-top: 7px; }
.form-row {
	display: flex;
	align-items: center;
	justify-content: space-between;
	line-height: 18px;
}
.form-row > span:first-child { padding-bottom: 2px; }
.r24 { height: 24px; }
.r19 { height: 19px; margin-top: 3px; }
.dlg-combo { width: 106px; height: 19px; margin-right: 1px; border-color: #777; border-radius: 4px; padding-left: 3px; }
.dlg-combo.tall { height: 24px; padding-left: 5px; }
.dlg-combo.tall span { padding-left: 5px; }
.pick {
	height: 31px;
	margin-top: 3px;
	display: flex;
	align-items: center;
	justify-content: space-between;
	background: linear-gradient(90deg, #dfa56e, #dcae82 45%, #d8d4ce 90%);
	border-radius: 7px 0 0 7px;
	line-height: 18px;
}
.pick-label { padding-bottom: 2px; }
.pick em { font-style: normal; font-family: "Liberation Mono", monospace; font-size: 11px; margin-left: 3px; }
.pick-btn {
	width: 30px;
	height: 30px;
	display: flex;
	align-items: center;
	justify-content: center;
	background: linear-gradient(#f8b070, #ef8a3c);
	border: 1px solid #8a5a30;
	border-radius: 4px;
}
.group {
	margin-top: 3px;
	background: #c2c2c2;
	border: 1px solid;
	border-color: #777 #f2f2f2 #f2f2f2 #777;
	padding: 0 8px;
}
.g1 { height: 123px; }
.g2 { height: 138px; }
.g3 { height: 137px; margin-top: 0; }
.grp-head {
	height: 21px;
	display: flex;
	align-items: center;
	justify-content: space-between;
	font-weight: bold;
	line-height: 18px;
	padding-right: 2px;
}
.grp-head span { padding-bottom: 2px; }
.checks { padding-top: 6px; }
.check { display: flex; align-items: center; height: 22px; gap: 2px; line-height: 18px; padding-bottom: 2px; }
.check i {
	width: 16px;
	height: 16px;
	margin-top: 2px;
	background: linear-gradient(#f4f4f4, #c0c0c0);
	border: 1px solid #666;
	border-radius: 3px;
	flex: none;
}
.add-row {
	height: 22px;
	margin-top: 4px;
	display: flex;
	align-items: center;
	justify-content: space-between;
	color: #999;
	line-height: 18px;
	padding-right: 2px;
}
.add-row > span:first-child { padding-bottom: 2px; }
.add-btn {
	width: 22px;
	height: 22px;
	display: flex;
	align-items: center;
	justify-content: center;
	background: #e6e6e6;
	border: 1px solid #bbb;
	border-radius: 3px;
}
.list-row { display: flex; gap: 3px; margin-top: 7px; }
.grid-wrap {
	height: 100px;
	flex: none;
	background: #fff;
	border: 1px solid #666;
	padding: 1px;
	overflow: hidden;
	display: flex;
	flex-direction: column;
	margin-top: 0;
}
.gw1 { width: 216px; }
.gw2 { width: 241px; margin-top: 7px; }
.grid {
	width: 100%;
	flex: none;
	table-layout: fixed;
	border-collapse: collapse;
}
.w100 { width: 100px; }
.w70 { width: 70px; }
.grid th {
	height: 16px;
	padding: 0 0 0 4px;
	overflow: hidden;
	font-weight: normal;
	text-align: left;
	line-height: 15px;
	white-space: nowrap;
	background: linear-gradient(#f4f4f4, #d8d8d8);
	border-right: 1px solid #999;
	border-bottom: 1px solid #777;
}
.grid td {
	height: 20px;
	padding: 0 0 0 2px;
	line-height: 17px;
	border-right: 1px solid #e4e4e4;
	border-bottom: 1px solid #e4e4e4;
}
.grid .alt td { background: #f5f5f5; }
.grid .sel td { background: #0a2463; color: #fff; border-right-color: #fff; }
.gw1 .grid { height: 77px; overflow: hidden; }
.hscroll { height: 17px; margin-top: 2px; display: flex; flex: none; }
.del-btn {
	width: 22px;
	height: 22px;
	margin-top: 1px;
	display: flex;
	align-items: center;
	justify-content: center;
	background: linear-gradient(#f4f4f4, #d0d0d0);
	border: 1px solid #888;
	border-radius: 3px;
	flex: none;
}
.dlg-foot {
	margin-top: 4px;
	padding: 5px 11px 0 0;
	border-top: 1px solid #fff;
	box-shadow: 0 -1px 0 #bbb;
	display: flex;
	justify-content: flex-end;
	gap: 7px;
}
.btn {
	width: 51px;
	height: 17px;
	display: flex;
	align-items: center;
	justify-content: center;
	line-height: 15px;
	padding-bottom: 1px;
	background: linear-gradient(#fafafa, #d6d6d6 50%, #ececec);
	border: 1px solid #666;
	border-radius: 3px;
}
.btn.ok {
	width: 52px;
	background: linear-gradient(#bfeeaa, #6fcb5e 50%, #a6e88c);
	border-color: #2f7a2f;
}

/* watermark + red pen */
.watermark {
	position: absolute;
	left: 943px;
	top: 765px;
	display: flex;
	gap: 8px;
	pointer-events: none;
}
.wm-text { padding-top: 3px; color: rgba(255,255,255,.45); font-family: "Liberation Sans", "Noto Sans CJK SC", sans-serif; white-space: nowrap; }
.wm-big { font-size: 48px; line-height: 52px; font-weight: bold; }
.wm-url { font-size: 13px; line-height: 14px; font-weight: bold; letter-spacing: 4px; margin-top: 1px; }
.scribble { position: absolute; left: 0; top: 0; pointer-events: none; }
```
